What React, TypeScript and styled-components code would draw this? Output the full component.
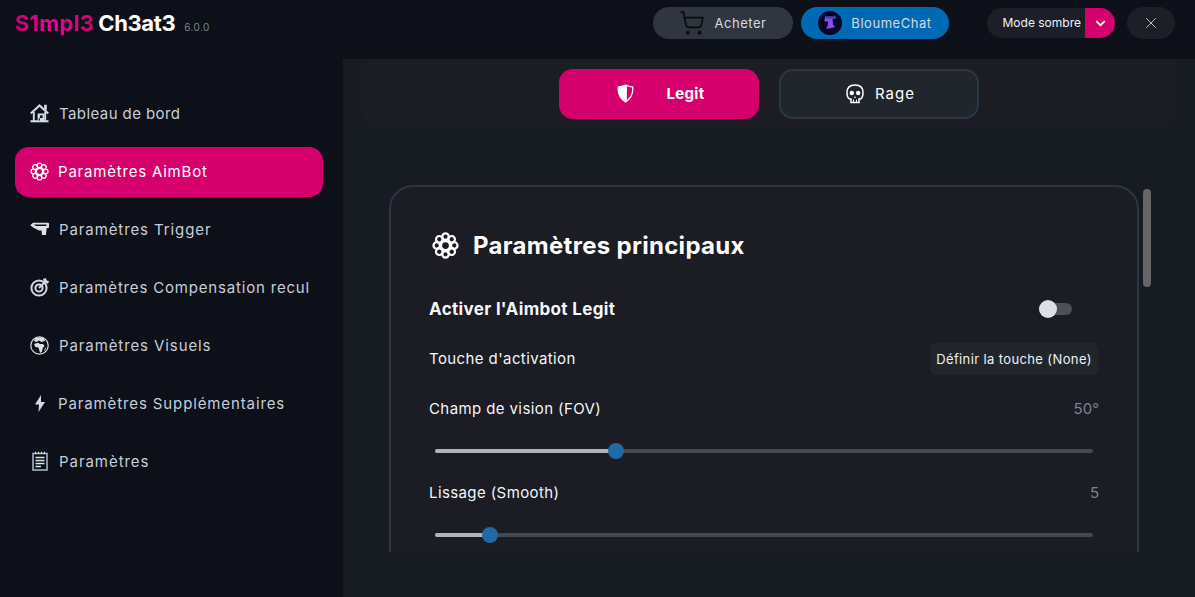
import React from "react";
import styled, { createGlobalStyle } from "styled-components";
import { FaChevronDown } from "react-icons/fa";
import { ShoppingCart, X } from "lucide-react";

const Global = createGlobalStyle`
  html, body { margin: 0; padding: 0; height: 100%; background: #171b22; overflow: hidden; }
  * { box-sizing: border-box; }
  body { font-family: Inter, "Liberation Sans", sans-serif; }
`;

const Page = styled.div`
  width: 1195px;
  height: 597px;
  display: grid;
  grid-template-rows: 59px 1fr;
  background: #171b22;
  color: #fff;
`;

const TopBar = styled.header`
  display: flex;
  align-items: center;
  padding: 0 20px 0 15px;
  background: #0d1018;
`;

const Logo = styled.div`
  display: flex;
  align-items: baseline;
  font-size: 22px;
  font-weight: 700;
  letter-spacing: -0.35px;
  margin-top: -14px;
  flex: 1;
`;

const LogoPink = styled.span`
  background: linear-gradient(90deg, #c8006a, #f000a0 40%, #d6006c);
  -webkit-background-clip: text;
  background-clip: text;
  color: transparent;
  letter-spacing: 0.2px;
  margin-right: 4px;
`;

const Version = styled.span`
  font-size: 10px;
  font-weight: 400;
  letter-spacing: 0.4px;
  color: #7d8590;
  margin-left: 9px;
`;

const PillGroup = styled.div`
  display: flex;
  align-items: center;
  gap: 8px;
  margin-top: -13px;
  margin-right: 38px;
`;

const Pill = styled.div<{ $bg: string; $w: number }>`
  width: ${(p) => p.$w}px;
  height: 32px;
  display: flex;
  align-items: center;
  justify-content: center;
  gap: 9px;
  border-radius: 16px;
  background: ${(p) => p.$bg};
  color: #d4dae2;
  font-size: 13px;
  letter-spacing: 0.55px;
`;

const ModeSwitch = styled.div`
  width: 128px;
  height: 30px;
  display: flex;
  align-items: center;
  border-radius: 15px;
  overflow: hidden;
  background: #1c1f27;
  margin-top: -13px;
  margin-right: 12px;
`;

const ModeLabel = styled.span`
  flex: 1;
  text-align: right;
  padding: 0 4px 2px 0;
  font-size: 12px;
  color: #f0f2f5;
`;

const ModeCaret = styled.span`
  width: 30px;
  height: 30px;
  display: flex;
  align-items: center;
  justify-content: center;
  background: #d6006c;
  color: #fff;
`;

const CloseButton = styled.div`
  width: 48px;
  height: 32px;
  display: flex;
  align-items: center;
  justify-content: center;
  border-radius: 16px;
  background: #1c1f27;
  color: #f0f2f5;
  margin-top: -13px;
`;

const Body = styled.div`
  display: grid;
  grid-template-columns: 343px 1fr;
  min-height: 0;
`;

const Sidebar = styled.nav`
  background: #0d1018;
  padding: 29px 20px 0 15px;
  display: flex;
  flex-direction: column;
  gap: 8px;
`;

const NavItem = styled.div<{ $active?: boolean; $gap: number; $spacing: number }>`
  height: 50px;
  display: flex;
  align-items: center;
  gap: ${(p) => p.$gap}px;
  padding: 0 0 ${(p) => (p.$active ? 2 : 0)}px 15px;
  margin: ${(p) => (p.$active ? "1px 0 -1px" : "0")};
  border-radius: 14px;
  font-size: 15px;
  letter-spacing: ${(p) => p.$spacing}px;
  white-space: nowrap;
  background: ${(p) => (p.$active ? "#d6006c" : "transparent")};
  color: ${(p) => (p.$active ? "#fff" : "#c6ced9")};
`;

const NavIcon = styled.span`
  width: 19px;
  height: 20px;
  flex: none;
  display: flex;
  align-items: center;
  justify-content: center;
`;

const Main = styled.main`
  position: relative;
  display: flex;
  flex-direction: column;
  min-width: 0;
  min-height: 0;
  padding: 0 20px 45px 19px;
`;

const TabStrip = styled.div`
  height: 68px;
  flex: none;
  display: flex;
  justify-content: center;
  gap: 20px;
  padding: 10px 0 8px;
  background: #1b1c24;
  border-radius: 0 0 10px 10px;
`;

const Tab = styled.div<{ $active?: boolean }>`
  width: 200px;
  height: 50px;
  display: flex;
  align-items: center;
  justify-content: center;
  gap: ${(p) => (p.$active ? 33 : 11)}px;
  padding: 0 0 1px 4px;
  border-radius: 14px;
  font-size: 15px;
  letter-spacing: ${(p) => (p.$active ? 0.3 : 1)}px;
  font-weight: ${(p) => (p.$active ? 700 : 400)};
  color: #fff;
  background: ${(p) => (p.$active ? "#d6006c" : "#21262d")};
  border: ${(p) => (p.$active ? "none" : "2px solid #2c3648")};
`;

const Scroller = styled.div`
  flex: 1;
  min-height: 0;
  margin-top: 58px;
  padding-left: 27px;
  overflow: hidden;
`;

const ScrollThumb = styled.div`
  position: absolute;
  left: 800px;
  top: 130px;
  width: 8px;
  height: 98px;
  border-radius: 4px;
  background: #666;
`;

const Card = styled.section`
  width: 750px;
  height: 1340px;
  padding: 36px 38px 0;
  border: 2px solid #2c3648;
  border-radius: 24px;
  background: #1b1c24;
`;

const CardTitle = styled.h2`
  display: flex;
  align-items: center;
  gap: 14px;
  margin: 0 0 17px;
  padding-left: 3px;
  height: 44px;
  font-size: 24px;
  letter-spacing: 0.3px;
  font-weight: 700;
  color: #fff;
`;

const Row = styled.div<{ $h: number }>`
  height: ${(p) => p.$h}px;
  display: flex;
  align-items: center;
  justify-content: space-between;
`;

const RowLabel = styled.span<{ $bold?: boolean }>`
  font-size: ${(p) => (p.$bold ? 17 : 15)}px;
  font-weight: ${(p) => (p.$bold ? 700 : 400)};
  letter-spacing: ${(p) => (p.$bold ? 0.35 : 0.4)}px;
  margin-top: ${(p) => (p.$bold ? 0 : -2)}px;
  color: #f4f6f8;
`;

const Value = styled.span`
  font-size: 15px;
  margin-top: -2px;
  color: #75839a;
`;

const Toggle = styled.div`
  width: 33px;
  height: 18px;
  margin-right: 27px;
  display: flex;
  align-items: center;
  position: relative;
`;

const ToggleTrack = styled.span`
  width: 100%;
  height: 12px;
  border-radius: 6px;
  background: #4d5157;
`;

const ToggleKnob = styled.span`
  position: absolute;
  left: 0;
  top: 0;
  width: 18px;
  height: 18px;
  border-radius: 50%;
  background: #dcdfe4;
`;

const KeyButton = styled.div`
  width: 168px;
  height: 32px;
  margin-right: 1px;
  display: flex;
  align-items: center;
  justify-content: center;
  border-radius: 6px;
  background: #21262d;
  color: #eef1f4;
  font-size: 13px;
  letter-spacing: 0.38px;
  white-space: nowrap;
`;

const SliderWrap = styled.div`
  height: 34px;
  padding: 15px 6px 0;
`;

const Track = styled.div`
  height: 4px;
  border-radius: 2px;
  background: #45484d;
  position: relative;
`;

const Fill = styled.div`
  height: 100%;
  border-radius: 2px;
  background: #b0b3bd;
`;

const Thumb = styled.span`
  position: absolute;
  top: -6px;
  width: 16px;
  height: 16px;
  margin-left: -8px;
  border-radius: 50%;
  background: #1f6aa8;
`;

const FlowerGear = ({ size, stroke = 2 }: { size: number; stroke?: number }) => (
  <svg width={size} height={size} viewBox="0 0 24 24" fill="none" stroke="currentColor" strokeWidth={stroke}>
    {[0, 45, 90, 135, 180, 225, 270, 315].map((a) => (
      <circle key={a} cx="12" cy="4.2" r="2.9" transform={`rotate(${a} 12 12)`} />
    ))}
    <circle cx="12" cy="12" r="4" />
  </svg>
);

const HouseIcon = () => (
  <svg width="20" height="20" viewBox="0 0 20 20" fill="none" stroke="#d3dae3">
    <path d="M0.8 10.5 L10 2 L19.2 10.5" strokeWidth="2.2" />
    <path d="M15.5 5.5 V2 H17 V7" strokeWidth="1.3" fill="#d3dae3" />
    <path d="M4 9 V18.5 M16 9 V18.5" strokeWidth="2" />
    <rect x="0.5" y="17.6" width="19" height="2.2" fill="#d3dae3" stroke="none" />
    <rect x="8" y="10.5" width="7" height="8" fill="#d3dae3" stroke="none" />
    <rect x="10.5" y="12.5" width="2.8" height="2.8" fill="#0d1018" stroke="none" />
    <rect x="9.2" y="15.5" width="1.2" height="2.5" fill="#0d1018" stroke="none" />
  </svg>
);

const GunIcon = () => (
  <svg width="19" height="14" viewBox="0 0 19 14" fill="#dbe1e8">
    <path d="M3 0.8 H18 Q19 0.8 19 1.8 V4.8 Q19 6 18 6 H16.8 L15.8 13 H12 L11.5 8.5 H9 L3.5 5.8 L0.2 3.2 Z" />
    <path d="M3.8 2.4 H16.5 V3.9 H6Z" fill="#0d1018" />
  </svg>
);

const TargetIcon = () => (
  <svg width="19" height="19" viewBox="0 0 19 19" fill="none" stroke="#d3dae3" strokeWidth="2">
    <circle cx="9" cy="10" r="7.6" />
    <circle cx="9" cy="10" r="3.6" />
    <path d="M9 10 L16 3" strokeWidth="1.8" />
    <path d="M13 1 L14 4.8 L18 5.8 L19 3 L16.5 2.4 L16 0Z" fill="#d3dae3" stroke="none" />
  </svg>
);

const GlobeIcon = () => (
  <svg width="19" height="19" viewBox="0 0 19 19" fill="#dbe1e8">
    <circle cx="9.5" cy="9.5" r="8.7" fill="#0d1018" stroke="#dbe1e8" strokeWidth="1.2" />
    <path d="M5 2.5 Q9.5 0.5 14 2.5 L15 5 L11.5 6 L9 4.5 L6.5 6 L4 5Z" />
    <path d="M4 8 L8 6.8 L10 8 L13 8 L14.5 10 L12.8 12 L12 15.5 L10.2 17 L9 13.5 L8.5 11.5 L5.5 11 Z" />
    <path d="M15.2 11.5 L16 12 L15 15 L14.3 14.5Z" />
  </svg>
);

const BoltIcon = () => (
  <svg width="12" height="17" viewBox="0 0 12 17" fill="#d3dae3">
    <path d="M7 0 L1 9.5 H5 L4.5 17 L11 7 H7Z" />
  </svg>
);

const ClipboardIcon = () => (
  <svg width="16" height="20" viewBox="0 0 16 20" fill="none" stroke="#a9bed6" strokeWidth="1.5">
    <rect x="1" y="2.5" width="14" height="16.5" fill="#0d1018" />
    <path d="M3.5 0.8 V3 M6.5 0.8 V3 M9.5 0.8 V3 M12.5 0.8 V3" stroke="#dbe1e8" strokeWidth="1.2" />
    <path d="M3.5 6.5 H12.5 M3.5 9.5 H12.5 M3.5 12.5 H12.5 M3.5 15.5 H9" stroke="#dbe1e8" strokeWidth="1.3" />
  </svg>
);

const ShieldIcon = () => (
  <svg width="17" height="19" viewBox="0 0 18 20">
    <path d="M9 1 Q13 3 16.5 3 Q18 13 9 19 Q0 13 1.5 3 Q5 3 9 1Z" fill="none" stroke="#fff" strokeWidth="1.4" />
    <path d="M10.5 1 Q5 3 1.5 3 Q0 13 10.5 19Z" fill="#fff" />
  </svg>
);

const SkullIcon = () => (
  <svg width="18" height="20" viewBox="0 0 18 20" fill="none" stroke="#fff" strokeWidth="1.5">
    <path d="M5 15 H3.5 Q1 13.5 1 8.5 Q1 1 9 1 Q17 1 17 8.5 Q17 13.5 14.5 15 H13 V18.5 H5Z" />
    <circle cx="5.8" cy="9" r="2.2" fill="#fff" stroke="none" />
    <circle cx="12.2" cy="9" r="2.2" fill="#fff" stroke="none" />
    <path d="M8 14 L9 12 L10 14Z" fill="#fff" stroke="none" />
    <path d="M7.5 15.5 V18 M10.5 15.5 V18" strokeWidth="1" />
  </svg>
);

const BloumeLogo = () => (
  <svg width="24" height="24" viewBox="0 0 24 24">
    <circle cx="12" cy="12" r="12" fill="#05052a" />
    <path d="M7 5.5 H18 L17 8 H14.5 L15 14 L17.5 16 L8 18 L10 14 L10 10.5 H6.5Z" fill="#8a4df0" />
    <path d="M7 5.5 H18 L17 7.5 H8Z" fill="#2b4ea8" />
  </svg>
);

const navItems = [
  { label: "Tableau de bord", icon: <HouseIcon />, gap: 10, spacing: 0.42 },
  { label: "Paramètres AimBot", icon: <FlowerGear size={19} stroke={1.6} />, active: true, gap: 9, spacing: 0.8 },
  { label: "Paramètres Trigger", icon: <GunIcon />, gap: 10, spacing: 0.9 },
  { label: "Paramètres Compensation recul", icon: <TargetIcon />, gap: 10, spacing: 0.82 },
  { label: "Paramètres Visuels", icon: <GlobeIcon />, gap: 10, spacing: 0.9 },
  { label: "Paramètres Supplémentaires", icon: <BoltIcon />, gap: 9, spacing: 0.88 },
  { label: "Paramètres", icon: <ClipboardIcon />, gap: 10, spacing: 0.95 },
];

const Slider = ({ pct }: { pct: number }) => (
  <SliderWrap>
    <Track>
      <Fill style={{ width: `${pct}%` }} />
      <Thumb style={{ left: `${pct}%` }} />
    </Track>
  </SliderWrap>
);

export default function App() {
  return (
    <Page>
      <Global />
      <TopBar>
        <Logo>
          <LogoPink>S1mpl3</LogoPink>
          Ch3at3
          <Version>6.0.0</Version>
        </Logo>
        <PillGroup>
          <Pill $bg="#2f363f" $w={140}>
            <ShoppingCart size={26} color="#0a0a0a" strokeWidth={1.6} />
            Acheter
          </Pill>
          <Pill $bg="#0069b4" $w={148}>
            <BloumeLogo />
            BloumeChat
          </Pill>
        </PillGroup>
        <ModeSwitch>
          <ModeLabel>Mode sombre</ModeLabel>
          <ModeCaret>
            <FaChevronDown size={11} />
          </ModeCaret>
        </ModeSwitch>
        <CloseButton>
          <X size={18} strokeWidth={1} />
        </CloseButton>
      </TopBar>
      <Body>
        <Sidebar>
          {navItems.map((n) => (
            <NavItem key={n.label} $active={n.active} $gap={n.gap} $spacing={n.spacing}>
              <NavIcon>{n.icon}</NavIcon>
              {n.label}
            </NavItem>
          ))}
        </Sidebar>
        <Main>
          <TabStrip>
            <Tab $active>
              <ShieldIcon />
              Legit
            </Tab>
            <Tab>
              <SkullIcon />
              Rage
            </Tab>
          </TabStrip>
          <Scroller>
            <Card>
              <CardTitle>
                <FlowerGear size={27} stroke={2} />
                Paramètres principaux
              </CardTitle>
              <Row $h={50}>
                <RowLabel $bold>Activer l'Aimbot Legit</RowLabel>
                <Toggle>
                  <ToggleTrack />
                  <ToggleKnob />
                </Toggle>
              </Row>
              <Row $h={50}>
                <RowLabel>Touche d'activation</RowLabel>
                <KeyButton>Définir la touche (None)</KeyButton>
              </Row>
              <Row $h={50}>
                <RowLabel>Champ de vision (FOV)</RowLabel>
                <Value>50°</Value>
              </Row>
              <Slider pct={27.5} />
              <Row $h={50}>
                <RowLabel>Lissage (Smooth)</RowLabel>
                <Value>5</Value>
              </Row>
              <Slider pct={8.3} />
            </Card>
          </Scroller>
          <ScrollThumb />
        </Main>
      </Body>
    </Page>
  );
}
